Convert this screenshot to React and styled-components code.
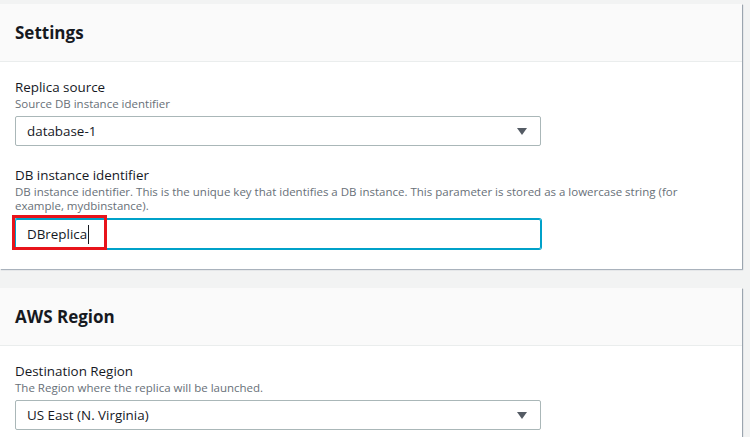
import React from "react";
import styled, { createGlobalStyle } from "styled-components";

const GlobalStyle = createGlobalStyle`
    body {
        margin: 0;
        background: #f2f3f3;
        font-family: "Open Sans", "Noto Sans", Arial, sans-serif;
        color: #16191f;
    }
`;

const Page = styled.div`
    padding-top: 4px;
    width: 750px;
    height: 437px;
    overflow: hidden;
`;

const Card = styled.section`
    width: 742px;
    background: #fff;
    box-shadow: 1px 1px 1px rgba(0, 31, 63, 0.3), 1px 0 0 rgba(0, 0, 0, 0.08);
    margin-bottom: 19px;
`;

const Header = styled.div`
    height: 57px;
    display: flex;
    align-items: center;
    padding: 0 15px;
    background: #fafafa;
    border-bottom: 1px solid #eaeded;
`;

const Title = styled.h2`
    margin: 0;
    font-size: 17px;
    font-weight: 700;
    color: #16191f;
`;

const Body = styled.div`
    padding: 16px 15px 20px;
    display: flex;
    flex-direction: column;
    gap: 20px;
`;

const Field = styled.div`
    display: flex;
    flex-direction: column;
`;

const Label = styled.div`
    font-size: 13.4px;
    line-height: 18px;
    color: #16191f;
`;

const Hint = styled.div`
    font-size: 11.5px;
    line-height: 14px;
    color: #687078;
    margin-top: 1px;
    margin-bottom: ${(p) => p.$gap || 5}px;
    max-width: 700px;
`;

const Select = styled.div`
    position: relative;
    box-sizing: border-box;
    width: 526px;
    height: 30px;
    display: flex;
    align-items: center;
    padding: 0 11px;
    border: 1px solid #aab7b8;
    border-radius: 2px;
    font-size: 13.4px;
    color: #16191f;
`;

const Arrow = styled.span`
    margin-left: auto;
    margin-right: 2px;
    width: 0;
    height: 0;
    border-left: 5px solid transparent;
    border-right: 5px solid transparent;
    border-top: 7px solid #545b64;
`;

const Input = styled(Select)`
    border-color: #00a1c9;
    box-shadow: 0 0 0 1px #00a1c9;
`;

const Caret = styled.span`
    display: inline-block;
    width: 1px;
    height: 19px;
    background: #16191f;
    margin-left: 1px;
`;

const Highlight = styled.span`
    position: absolute;
    left: -4px;
    top: -5px;
    width: 95px;
    height: 35px;
    box-sizing: border-box;
    border: 3px solid #e8141b;
`;

export default function App() {
    return (
        <Page>
            <GlobalStyle />
            <Card>
                <Header>
                    <Title>Settings</Title>
                </Header>
                <Body>
                    <Field>
                        <Label>Replica source</Label>
                        <Hint>Source DB instance identifier</Hint>
                        <Select>
                            database-1
                            <Arrow />
                        </Select>
                    </Field>
                    <Field>
                        <Label>DB instance identifier</Label>
                        <Hint $gap={6}>
                            DB instance identifier. This is the unique key that identifies a DB instance. This
                            parameter is stored as a lowercase string (for example, mydbinstance).
                        </Hint>
                        <Input>
                            DBreplica
                            <Caret />
                            <Highlight />
                        </Input>
                    </Field>
                </Body>
            </Card>
            <Card>
                <Header>
                    <Title>AWS Region</Title>
                </Header>
                <Body>
                    <Field>
                        <Label>Destination Region</Label>
                        <Hint>The Region where the replica will be launched.</Hint>
                        <Select>
                            US East (N. Virginia)
                            <Arrow />
                        </Select>
                    </Field>
                </Body>
            </Card>
        </Page>
    );
}
